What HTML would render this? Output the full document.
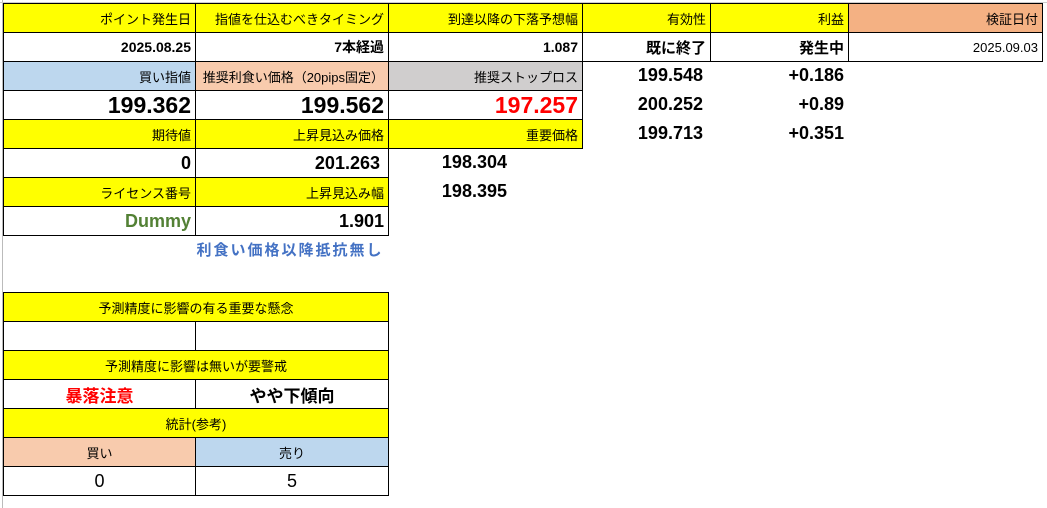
<!DOCTYPE html>
<html><head><meta charset="utf-8"><style>
body{margin:0;width:1047px;height:508px;background:#fff;position:relative;overflow:hidden;font-family:"Liberation Sans","Noto Sans CJK JP",sans-serif;}
.c{position:absolute;box-sizing:border-box;border:1px solid #000;display:flex;align-items:center;justify-content:flex-end;padding-right:4px;font-size:13px;color:#000;white-space:nowrap;}
.n{border:none}
.y{background:#ffff00}
.b{background:#bdd7ee}
.p{background:#f8cbad}
.g{background:#d0cece}
.o{background:#f4b183}
.bd{font-weight:bold;font-size:14px}
.big{font-size:23px;font-weight:bold}
.md{font-size:18px;font-weight:bold}
.ctr{justify-content:center;padding-right:0}
</style></head><body>
<div style="position:absolute;left:2px;top:0;width:1px;height:508px;background:#bbb"></div>
<div style="position:absolute;left:0;top:2px;width:1047px;height:1px;background:#ccc"></div>
<!-- row0 -->
<div class="c y" style="left:3px;top:3px;width:193px;height:30px">ポイント発生日</div>
<div class="c y" style="left:195px;top:3px;width:194px;height:30px">指値を仕込むべきタイミング</div>
<div class="c y" style="left:388px;top:3px;width:195px;height:30px">到達以降の下落予想幅</div>
<div class="c y" style="left:582px;top:3px;width:129px;height:30px">有効性</div>
<div class="c y" style="left:710px;top:3px;width:139px;height:30px">利益</div>
<div class="c o" style="left:848px;top:3px;width:195px;height:30px">検証日付</div>
<!-- row1 -->
<div class="c bd" style="left:3px;top:32px;width:193px;height:30px">2025.08.25</div>
<div class="c bd" style="left:195px;top:32px;width:194px;height:30px">7本経過</div>
<div class="c bd" style="left:388px;top:32px;width:195px;height:30px">1.087</div>
<div class="c bd" style="left:582px;top:32px;width:129px;height:30px;font-size:15px">既に終了</div>
<div class="c bd" style="left:710px;top:32px;width:139px;height:30px;font-size:15px">発生中</div>
<div class="c" style="left:848px;top:32px;width:195px;height:30px">2025.09.03</div>
<!-- row2 -->
<div class="c b" style="left:3px;top:61px;width:193px;height:30px">買い指値</div>
<div class="c p" style="left:195px;top:61px;width:194px;height:30px">推奨利食い価格（20pips固定）</div>
<div class="c g" style="left:388px;top:61px;width:195px;height:30px">推奨ストップロス</div>
<div class="c n md" style="left:582px;top:61px;width:128px;height:29px;padding-right:7px">199.548</div>
<div class="c n md" style="left:710px;top:61px;width:138px;height:29px;padding-right:4px">+0.186</div>
<!-- row3 -->
<div class="c big" style="left:3px;top:90px;width:193px;height:30px">199.362</div>
<div class="c big" style="left:195px;top:90px;width:194px;height:30px">199.562</div>
<div class="c big" style="left:388px;top:90px;width:195px;height:30px;color:#ff0000">197.257</div>
<div class="c n md" style="left:582px;top:90px;width:128px;height:29px;padding-right:7px">200.252</div>
<div class="c n md" style="left:710px;top:90px;width:138px;height:29px;padding-right:4px">+0.89</div>
<!-- row4 -->
<div class="c y" style="left:3px;top:119px;width:193px;height:30px">期待値</div>
<div class="c y" style="left:195px;top:119px;width:194px;height:30px">上昇見込み価格</div>
<div class="c y" style="left:388px;top:119px;width:195px;height:30px">重要価格</div>
<div class="c n md" style="left:582px;top:119px;width:128px;height:29px;padding-right:7px">199.713</div>
<div class="c n md" style="left:710px;top:119px;width:138px;height:29px;padding-right:4px">+0.351</div>
<!-- row5 -->
<div class="c md" style="left:3px;top:148px;width:193px;height:30px">0</div>
<div class="c md" style="left:195px;top:148px;width:194px;height:30px;padding-right:8px">201.263</div>
<div class="c n md" style="left:388px;top:148px;width:194px;height:29px;padding-right:75px">198.304</div>
<!-- row6 -->
<div class="c y" style="left:3px;top:177px;width:193px;height:30px">ライセンス番号</div>
<div class="c y" style="left:195px;top:177px;width:194px;height:30px">上昇見込み幅</div>
<div class="c n md" style="left:388px;top:177px;width:194px;height:29px;padding-right:75px">198.395</div>
<!-- row7 -->
<div class="c md" style="left:3px;top:206px;width:193px;height:30px;color:#538135">Dummy</div>
<div class="c md" style="left:195px;top:206px;width:194px;height:30px">1.901</div>
<div class="c n ctr" style="left:180px;top:235px;width:220px;height:29px;color:#4472c4;font-size:15px;font-weight:bold;letter-spacing:2px">利食い価格以降抵抗無し</div>
<!-- lower table -->
<div class="c y ctr" style="left:3px;top:292px;width:386px;height:30px">予測精度に影響の有る重要な懸念</div>
<div class="c" style="left:3px;top:321px;width:193px;height:30px"></div>
<div class="c" style="left:195px;top:321px;width:194px;height:30px"></div>
<div class="c y ctr" style="left:3px;top:350px;width:386px;height:30px">予測精度に影響は無いが要警戒</div>
<div class="c ctr" style="left:3px;top:379px;width:193px;height:30px;color:#ff0000;font-size:17px;font-weight:bold">暴落注意</div>
<div class="c ctr" style="left:195px;top:379px;width:194px;height:30px;font-size:17px;font-weight:bold">やや下傾向</div>
<div class="c y ctr" style="left:3px;top:408px;width:386px;height:30px">統計(参考)</div>
<div class="c p ctr" style="left:3px;top:437px;width:193px;height:30px">買い</div>
<div class="c b ctr" style="left:195px;top:437px;width:194px;height:30px">売り</div>
<div class="c ctr" style="left:3px;top:466px;width:193px;height:30px;font-size:18px">0</div>
<div class="c ctr" style="left:195px;top:466px;width:194px;height:30px;font-size:18px">5</div>
</body></html>
